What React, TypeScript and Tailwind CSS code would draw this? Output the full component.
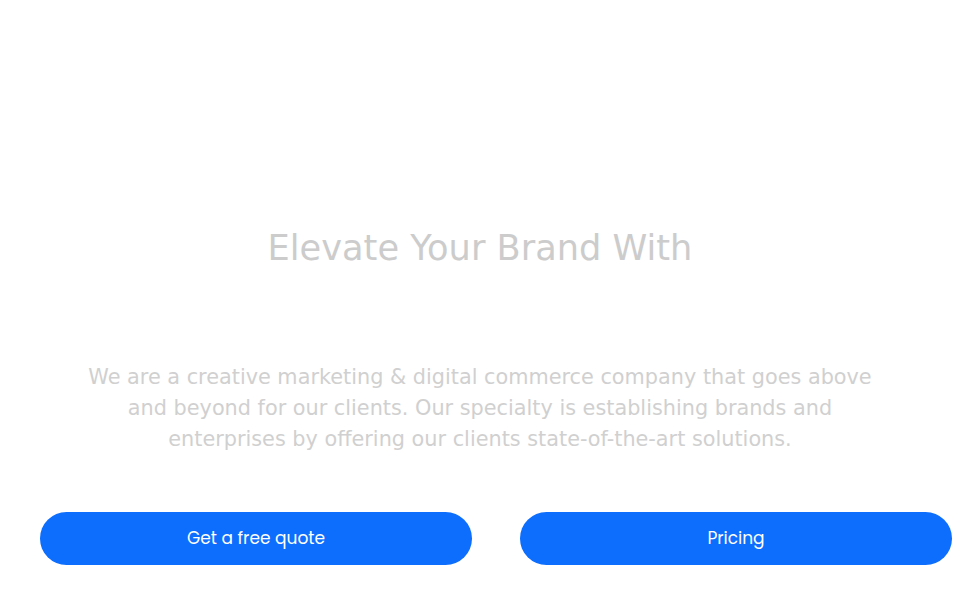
export default function App() {
  return (
    <div className="w-[960px] h-[600px] bg-white overflow-hidden" style={{ fontFamily: '"DejaVu Sans", sans-serif' }}>
      <div className="pt-[224px] flex flex-col items-center">
        <h1 className="text-[35.2px] leading-[48px] text-[#cccccc] font-normal text-center">Elevate Your Brand With</h1>
        <p className="mt-[90px] w-[800px] text-center text-[20.8px] leading-[31px] text-[#d0d0d0]">
          We are a creative marketing &amp; digital commerce company that goes above and beyond for our clients. Our specialty is establishing brands and enterprises by offering our clients state-of-the-art solutions.
        </p>
      </div>
      <div className="mt-[57px] flex pl-[40px] pr-[8px] gap-[48px]">
        <button className="flex-1 h-[53px] rounded-full bg-[#0d6efd] text-white text-[17px]" style={{ fontFamily: 'Poppins, Inter, "Noto Sans", sans-serif' }}>Get a free quote</button>
        <button className="flex-1 h-[53px] rounded-full bg-[#0d6efd] text-white text-[17px]" style={{ fontFamily: 'Poppins, Inter, "Noto Sans", sans-serif' }}>Pricing</button>
      </div>
    </div>
  );
}
